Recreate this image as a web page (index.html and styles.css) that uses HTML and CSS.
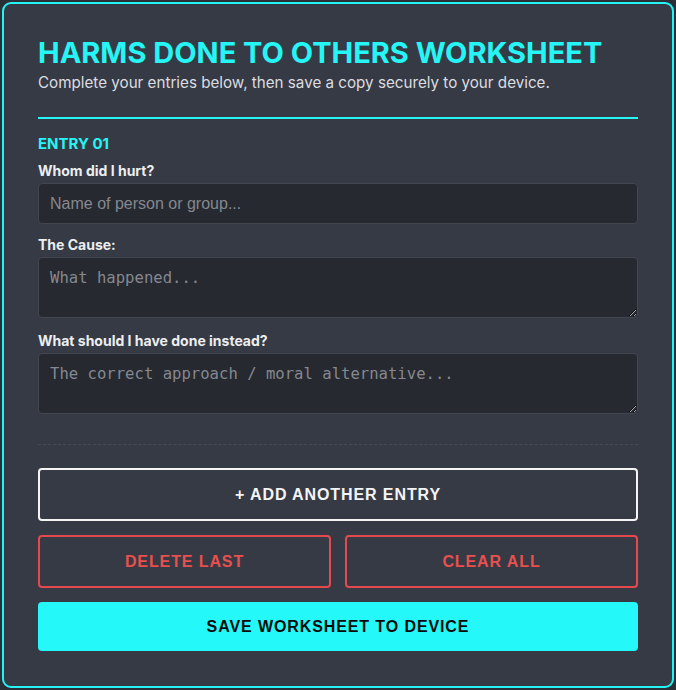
FILE: index.html
```html
<!DOCTYPE html>
<html>
<head>
<meta charset="utf-8">
<link rel="stylesheet" href="styles.css">
</head>
<body>
<div class="card">
  <h1 class="title">HARMS DONE TO OTHERS WORKSHEET</h1>
  <p class="subtitle">Complete your entries below, then save a copy securely to your device.</p>
  <div class="rule"></div>
  <div class="entry">
    <div class="entry-title">ENTRY 01</div>
    <label class="label">Whom did I hurt?</label>
    <input class="field" type="text" placeholder="Name of person or group...">
    <label class="label after-field">The Cause:</label>
    <textarea class="area" placeholder="What happened..."></textarea>
    <label class="label after-area">What should I have done instead?</label>
    <textarea class="area" placeholder="The correct approach / moral alternative..."></textarea>
  </div>
  <button class="btn btn-add">+ ADD ANOTHER ENTRY</button>
  <div class="row">
    <button class="btn btn-danger">DELETE LAST</button>
    <button class="btn btn-danger">CLEAR ALL</button>
  </div>
  <button class="btn btn-save">SAVE WORKSHEET TO DEVICE</button>
</div>
</body>
</html>
```
FILE: styles.css
```css
* { box-sizing: border-box; }
html, body { margin: 0; }
body {
  background: #2b2e35;
  padding: 2px;
  font-family: Inter, "Liberation Sans", sans-serif;
}
.card {
  background: #363a44;
  border: 2px solid #25f3f3;
  border-radius: 9px;
  padding: 31px 34px 34px;
  height: 686px;
}
.title {
  margin: 0;
  color: #25f5f5;
  font-size: 29px;
  font-weight: 700;
  line-height: 36px;
}
.subtitle {
  margin: 1px 0 0;
  color: #dcdde0;
  font-size: 15.2px;
  line-height: 22px;
}
.rule {
  height: 2px;
  background: #25f5f5;
  margin-top: 23px;
}
.entry {
  padding-top: 15px;
  padding-bottom: 30px;
  border-bottom: 1px dashed #474b55;
  margin-bottom: 23px;
  display: flex;
  flex-direction: column;
}
.entry-title {
  color: #25f5f5;
  font-weight: 700;
  font-size: 15px;
  line-height: 20px;
}
.label {
  color: #eceef0;
  font-weight: 700;
  font-size: 14px;
  line-height: 18px;
  margin-top: 8px;
  margin-bottom: 3px;
}
.label.after-field { margin-top: 12px; }
.label.after-area { margin-top: 14px; }
.field, .area {
  background: #262930;
  border: 1px solid #42464f;
  border-radius: 4px;
  color: #ddd;
  width: 100%;
  outline: none;
  margin: 0;
}
.field {
  height: 41px;
  padding: 0 11px;
  font-family: "Liberation Sans", Arial, sans-serif;
  font-size: 16px;
}
.area {
  height: 61px;
  font-family: "DejaVu Sans Mono", monospace;
  font-size: 15.6px;
  line-height: 20px;
  padding: 10px 11px;
  resize: vertical;
  display: block;
}
.field::placeholder, .area::placeholder { color: #85888f; }
.btn {
  display: block;
  width: 100%;
  font-family: "Liberation Sans", Arial, sans-serif;
  font-weight: 700;
  font-size: 16px;
  letter-spacing: 0.9px;
  border-radius: 4px;
  cursor: pointer;
}
.btn-add {
  height: 53px;
  background: transparent;
  border: 2px solid #f4f4f4;
  color: #f4f4f4;
}
.row {
  display: flex;
  gap: 14px;
  margin-top: 14px;
}
.btn-danger {
  height: 53px;
  flex: 1;
  background: transparent;
  border: 2px solid #e5484d;
  color: #e8504f;
}
.btn-save {
  margin-top: 14px;
  height: 49px;
  background: #25f8f8;
  border: none;
  color: #0b0b0b;
}
```
